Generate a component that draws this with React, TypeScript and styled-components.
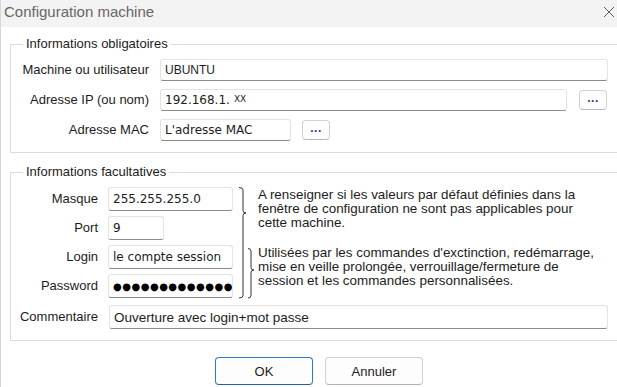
import React from "react";
import styled, { createGlobalStyle } from "styled-components";

const Global = createGlobalStyle`
  html, body { margin: 0; padding: 0; background: #fff; }
  body { font-family: "Liberation Sans", Arial, sans-serif; color: #1c1c1c; }
`;

const Window = styled.div`
  width: 617px;
  height: 387px;
  box-sizing: border-box;
  overflow: hidden;
  background: #fff;
  border-left: 1px solid #d6d6d6;
  display: flex;
  flex-direction: column;
`;

const TitleBar = styled.div`
  height: 27px;
  flex: none;
  background: #f3f3f3;
  display: flex;
  align-items: center;
  padding: 0 2px 0 3px;
`;

const Title = styled.div`
  font-size: 15px;
  color: #666;
  line-height: 18px;
  margin-top: -3px;
`;

const Close = styled.svg`
  margin-left: auto;
  margin-top: -4px;
  width: 12px;
  height: 12px;
`;

const Body = styled.div`
  padding: 9px 0 0 9px;
  display: flex;
  flex-direction: column;
`;

const Group = styled.fieldset<{ $gap?: number }>`
  margin: ${(p) => (p.$gap ? `${p.$gap}px 0 0 0` : "0")};
  padding: 0;
  border: 1px solid #dcdcdc;
  width: 608px;
  box-sizing: border-box;
  min-width: 0;
`;

const Legend = styled.legend`
  margin-left: 12px;
  padding: 0 3px;
  font-size: 13px;
  line-height: 16px;
  color: #1c1c1c;
`;

const Rows = styled.div`
  display: flex;
  flex-direction: column;
  gap: 8px;
  padding: 7px 0 11px 0;
`;

const Row = styled.div`
  display: flex;
  align-items: center;
  height: 22px;
`;

const Label = styled.div<{ $w: number }>`
  width: ${(p) => p.$w}px;
  flex: none;
  text-align: right;
  font-size: 13px;
  line-height: 16px;
  white-space: nowrap;
`;

const Field = styled.div<{ $w?: number; $mono?: boolean; $size?: number; $ml?: number }>`
  box-sizing: border-box;
  width: ${(p) => (p.$w ? `${p.$w}px` : "auto")};
  flex: ${(p) => (p.$w ? "none" : "1")};
  margin-left: ${(p) => p.$ml ?? 0}px;
  height: 100%;
  display: flex;
  align-items: center;
  padding: 0 0 0 4px;
  background: #fff;
  border: 1px solid #e3e3e3;
  border-bottom: 1px solid #8c8c8c;
  border-radius: 3px;
  font-family: ${(p) => (p.$mono ? '"DejaVu Sans", Verdana, sans-serif' : '"Liberation Sans", Arial, sans-serif')};
  font-size: ${(p) => p.$size ?? 12}px;
  color: #1c1c1c;
  white-space: nowrap;
  overflow: hidden;
`;

const Small = styled.span`
  font-size: 9px;
  margin-left: 4px;
  align-self: flex-start;
  margin-top: 4px;
`;

const Dots = styled.span`
  font-family: "DejaVu Sans", sans-serif;
  font-size: 10px;
  letter-spacing: 0.5px;
  color: #000;
`;

const Browse = styled.button<{ $ml: number }>`
  box-sizing: border-box;
  width: 28px;
  height: 20px;
  margin-left: ${(p) => p.$ml}px;
  padding: 0 0 5px 0;
  background: #fdfdfd;
  border: 1px solid #d2d2d2;
  border-bottom-color: #b8b8b8;
  border-radius: 4px;
  font-family: "Liberation Sans", Arial, sans-serif;
  font-size: 12px;
  font-weight: bold;
  line-height: 12px;
  letter-spacing: 0.5px;
  color: #3a3a8c;
`;

const OptGrid = styled.div`
  display: grid;
  grid-template-columns: 97px 125px 25px 1fr;
  grid-template-rows: repeat(4, 24px);
  row-gap: 5px;
  padding: 7px 0 0 0;
`;

const GridLabel = styled.div<{ $row: number }>`
  grid-column: 1;
  grid-row: ${(p) => p.$row};
  align-self: center;
  text-align: right;
  padding-right: 10px;
  font-size: 13px;
  line-height: 16px;
`;

const GridField = styled(Field)<{ $row: number }>`
  grid-column: 2;
  grid-row: ${(p) => p.$row};
`;

const Braces = styled.svg`
  grid-column: 3;
  grid-row: 1 / span 4;
  width: 25px;
  height: 112px;
`;

const Note = styled.div<{ $rows: string; $lh: number; $mt: number }>`
  grid-column: 4;
  grid-row: ${(p) => p.$rows};
  align-self: start;
  margin-top: ${(p) => p.$mt}px;
  font-size: 13.4px;
  line-height: ${(p) => p.$lh}px;
  white-space: nowrap;
  color: #1c1c1c;
`;

const CommentRow = styled.div`
  display: flex;
  align-items: center;
  height: 24px;
  margin: 7px 0 11px 0;
`;

const Buttons = styled.div`
  display: flex;
  gap: 12px;
  padding-left: 205px;
  margin-top: 16px;
`;

const DlgButton = styled.button<{ $primary?: boolean }>`
  box-sizing: border-box;
  width: 98px;
  height: 28px;
  background: #fdfdfd;
  border: 1px solid ${(p) => (p.$primary ? "#2b79c7" : "#d0d0d0")};
  border-bottom-color: ${(p) => (p.$primary ? "#1f62a8" : "#b0b0b0")};
  border-radius: 4px;
  font-family: "Liberation Sans", Arial, sans-serif;
  font-size: 13px;
  color: #1c1c1c;
  padding: 0;
`;

export default function App() {
  return (
    <>
      <Global />
      <Window>
        <TitleBar>
          <Title>Configuration machine</Title>
          <Close viewBox="0 0 12 12">
            <path d="M1 1 L11 11 M11 1 L1 11" stroke="#5c5c5c" strokeWidth="1" fill="none" />
          </Close>
        </TitleBar>
        <Body>
          <Group>
            <Legend>Informations obligatoires</Legend>
            <Rows>
              <Row>
                <Label $w={138}>Machine ou utilisateur</Label>
                <Field $w={448} $ml={11} $size={12}>UBUNTU</Field>
              </Row>
              <Row>
                <Label $w={138}>Adresse IP (ou nom)</Label>
                <Field $w={407} $ml={11} $mono>
                  192.168.1.<Small>XX</Small>
                </Field>
                <Browse $ml={12}>...</Browse>
              </Row>
              <Row>
                <Label $w={138}>Adresse MAC</Label>
                <Field $w={131} $ml={11} $mono>L'adresse MAC</Field>
                <Browse $ml={11}>...</Browse>
              </Row>
            </Rows>
          </Group>
          <Group $gap={11}>
            <Legend>Informations facultatives</Legend>
            <OptGrid>
              <GridLabel $row={1}>Masque</GridLabel>
              <GridField $row={1} $mono>255.255.255.0</GridField>
              <GridLabel $row={2}>Port</GridLabel>
              <GridField $row={2} $w={56} $mono>9</GridField>
              <GridLabel $row={3}>Login</GridLabel>
              <GridField $row={3} $mono>le compte session</GridField>
              <GridLabel $row={4}>Password</GridLabel>
              <GridField $row={4}>
                <Dots>●●●●●●●●●●●●●</Dots>
              </GridField>
              <Braces viewBox="0 0 25 112">
                <path
                  d="M6 0.5 Q10 0.5 10 3 V23.5 Q10 26 13 26 Q10 26 10 28.5 V108.5 Q10 111 6 111"
                  stroke="#333"
                  strokeWidth="1"
                  fill="none"
                />
                <path
                  d="M15 61.5 Q18 61.5 18 64 V80.5 Q18 83 21 83 Q18 83 18 85.5 V108.5 Q18 111 15 111"
                  stroke="#333"
                  strokeWidth="1"
                  fill="none"
                />
              </Braces>
              <Note $rows="1 / span 2" $lh={14} $mt={1}>
                A renseigner si les valeurs par défaut définies dans la
                <br />
                fenêtre de configuration ne sont pas applicables pour
                <br />
                cette machine.
              </Note>
              <Note $rows="3 / span 2" $lh={14} $mt={1}>
                Utilisées par les commandes d'exctinction, redémarrage,
                <br />
                mise en veille prolongée, verrouillage/fermeture de
                <br />
                session et les commandes personnalisées.
              </Note>
            </OptGrid>
            <CommentRow>
              <Label $w={87}>Commentaire</Label>
              <Field $w={499} $ml={11} $size={13.5}>Ouverture avec login+mot passe</Field>
            </CommentRow>
          </Group>
          <Buttons>
            <DlgButton $primary>OK</DlgButton>
            <DlgButton>Annuler</DlgButton>
          </Buttons>
        </Body>
      </Window>
    </>
  );
}
